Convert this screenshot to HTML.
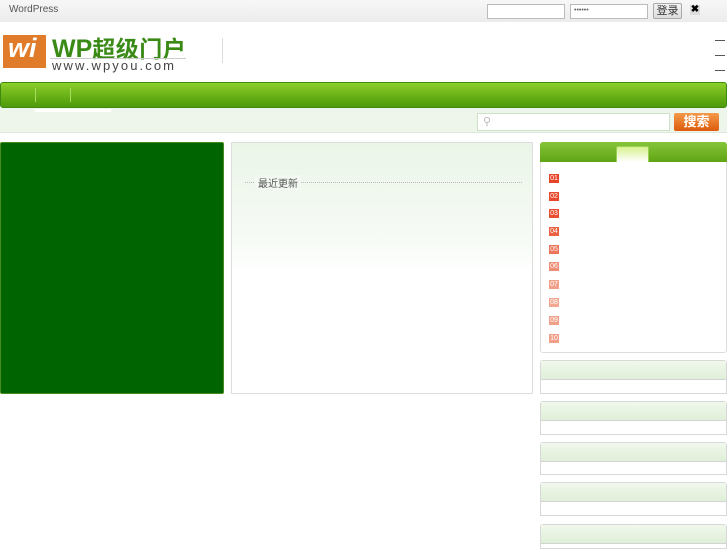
<!DOCTYPE html>
<html><head><meta charset="utf-8"><style>
*{margin:0;padding:0;box-sizing:border-box}
body{width:727px;height:545px;overflow:hidden;background:#fff;font-family:"Liberation Sans","Noto Sans CJK SC",sans-serif;position:relative}
.a{position:absolute}
.top{left:0;top:0;width:727px;height:22px;background:linear-gradient(#f7f7f7,#ececec)}
.inp{background:#fff;border:1px solid #bbb;height:15px;top:4px}
.nav{left:0;top:82px;width:727px;height:26px;background:linear-gradient(#8ccf2a,#5ea812 70%,#4f9a0c);border:1px solid #3f8a10;border-radius:3px}
.sb{left:0;top:108px;width:727px;height:25px;background:#eef6ec;border-bottom:1px solid #dfe8dc}
.num{left:549px;width:10px;height:9px;font-size:7px;color:#fff;line-height:9px;text-align:center}
.sm{left:540px;width:187px;border:1px solid #d8d8d8;border-radius:3px 3px 0 0}
.sm div{height:19px;background:linear-gradient(#f0f8ec,#e0efd8);border-bottom:1px solid #d4d4d4}
</style></head><body>
<div class="a top"></div>
<div class="a" style="left:9px;top:4px;font-size:10px;color:#555">WordPress</div>
<div class="a inp" style="left:487px;width:78px"></div>
<div class="a inp" style="left:570px;width:78px;font-size:7px;color:#666;padding-left:3px;line-height:12px">••••••</div>
<div class="a" style="left:653px;top:3px;width:29px;height:16px;border:1px solid #aaa;border-radius:2px;background:linear-gradient(#f4f4f4,#dcdcdc);font-size:11px;color:#333;text-align:center;line-height:14px">登录</div>
<div class="a" style="left:690px;top:5px;width:10px;height:10px;background:#ddd;font-size:10px;line-height:10px;text-align:center;font-weight:bold;color:#000">✖</div>

<div class="a" style="left:3px;top:35px;width:43px;height:33px;background:#e07b2a"></div>
<div class="a" style="left:8px;top:33px;font-size:27px;font-weight:bold;color:#fff;font-style:italic">wi</div>
<div class="a" style="left:52px;top:30px;font-size:25px;font-weight:bold;color:#3a8a16;white-space:nowrap">WP<span style="font-size:23px;letter-spacing:0.5px">超级门户</span></div>
<div class="a" style="left:50px;top:58px;width:136px;border-top:1px solid #ccc"></div>
<div class="a" style="left:52px;top:58px;font-size:13px;color:#444;letter-spacing:2.1px">www.wpyou.com</div>
<div class="a" style="left:222px;top:38px;width:1px;height:25px;background:#ddd"></div>
<div class="a" style="left:715px;top:40px;width:10px;height:1px;background:#555"></div>
<div class="a" style="left:715px;top:55px;width:10px;height:1px;background:#555"></div>
<div class="a" style="left:715px;top:70px;width:10px;height:1px;background:#555"></div>

<div class="a nav"></div>
<div class="a" style="left:35px;top:88px;width:1px;height:14px;background:#a8dc60"></div>
<div class="a" style="left:70px;top:88px;width:1px;height:14px;background:#a8dc60"></div>
<div class="a sb"></div>
<div class="a" style="left:35px;top:109px;width:76px;height:3px;background:#fff"></div>
<div class="a" style="left:477px;top:113px;width:193px;height:18px;background:#fff;border:1px solid #cfe0c8"></div>
<div class="a" style="left:483px;top:115px;font-size:11px;color:#bbb">⚲</div>
<div class="a" style="left:674px;top:113px;width:45px;height:18px;background:linear-gradient(#f39a4a,#dd5b0c);color:#fff;font-size:13px;font-weight:bold;text-align:center;line-height:18px;border-radius:2px">搜索</div>

<div class="a" style="left:0;top:142px;width:224px;height:252px;background:#006400;border:1px solid #4a8a20;border-radius:2px"></div>

<div class="a" style="left:231px;top:142px;width:302px;height:252px;border:1px solid #ddd;background:linear-gradient(#eaf5e8,#f7fbf6 40%,#fff 52%)"></div>
<div class="a" style="left:245px;top:182px;width:277px;border-top:1px dotted #bbb"></div>
<div class="a" style="left:255px;top:175px;font-size:10px;color:#555;background:#f3f9f2;padding:0 3px">最近更新</div>

<div class="a" style="left:540px;top:142px;width:187px;height:211px;border:1px solid #ddd;border-radius:3px"></div>
<div class="a" style="left:540px;top:142px;width:187px;height:20px;background:linear-gradient(#86c53a,#5fa514);border-radius:3px 3px 0 0"></div>
<div class="a" style="left:616px;top:146px;width:33px;height:16px;background:linear-gradient(#d8f090,#fff);border:1px solid #9cd050;border-bottom:none;border-radius:2px 2px 0 0"></div>
<div class="a num" style="top:174px;background:#e8442a">01</div>
<div class="a num" style="top:192px;background:#e8482c">02</div>
<div class="a num" style="top:209px;background:#e84e30">03</div>
<div class="a num" style="top:227px;background:#ea6040">04</div>
<div class="a num" style="top:245px;background:#ec7458">05</div>
<div class="a num" style="top:262px;background:#f08e76">06</div>
<div class="a num" style="top:280px;background:#f2a088">07</div>
<div class="a num" style="top:298px;background:#f2a890">08</div>
<div class="a num" style="top:316px;background:#f0a088">09</div>
<div class="a num" style="top:334px;background:#f0a088">10</div>

<div class="a sm" style="top:360px;height:34px"><div></div></div>
<div class="a sm" style="top:401px;height:34px"><div></div></div>
<div class="a sm" style="top:442px;height:33px"><div></div></div>
<div class="a sm" style="top:482px;height:34px"><div></div></div>
<div class="a sm" style="top:524px;height:25px"><div></div></div>
</body></html>
